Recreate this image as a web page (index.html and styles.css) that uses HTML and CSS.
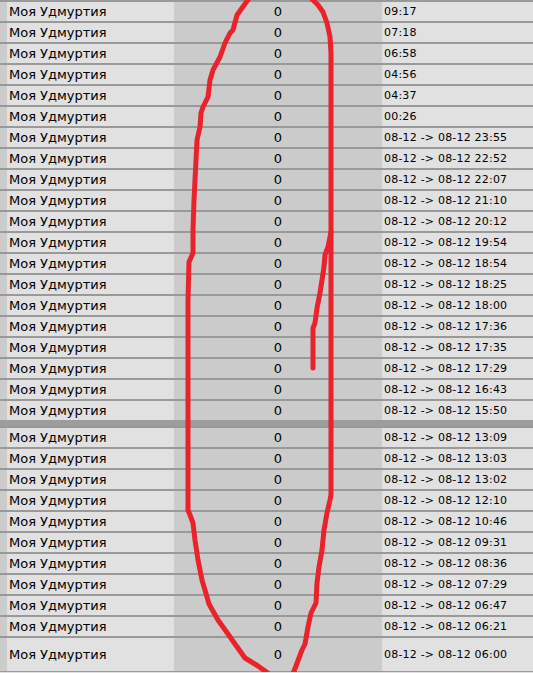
FILE: index.html
```html
<!DOCTYPE html>
<html lang="ru">
<head>
    <meta charset="UTF-8">
    <meta name="viewport" content="width=device-width, initial-scale=1.0">
    <title>Моя Удмуртия - история</title>
    <link rel="stylesheet" href="styles.css">
</head>
<body>
    <div class="board">
        <div class="row"><span class="name">Моя Удмуртия</span><span class="score">0</span><span class="time">09:17</span></div>
        <div class="row"><span class="name">Моя Удмуртия</span><span class="score">0</span><span class="time">07:18</span></div>
        <div class="row"><span class="name">Моя Удмуртия</span><span class="score">0</span><span class="time">06:58</span></div>
        <div class="row"><span class="name">Моя Удмуртия</span><span class="score">0</span><span class="time">04:56</span></div>
        <div class="row"><span class="name">Моя Удмуртия</span><span class="score">0</span><span class="time">04:37</span></div>
        <div class="row"><span class="name">Моя Удмуртия</span><span class="score">0</span><span class="time">00:26</span></div>
        <div class="row"><span class="name">Моя Удмуртия</span><span class="score">0</span><span class="time">08-12 -&gt; 08-12 23:55</span></div>
        <div class="row"><span class="name">Моя Удмуртия</span><span class="score">0</span><span class="time">08-12 -&gt; 08-12 22:52</span></div>
        <div class="row"><span class="name">Моя Удмуртия</span><span class="score">0</span><span class="time">08-12 -&gt; 08-12 22:07</span></div>
        <div class="row"><span class="name">Моя Удмуртия</span><span class="score">0</span><span class="time">08-12 -&gt; 08-12 21:10</span></div>
        <div class="row"><span class="name">Моя Удмуртия</span><span class="score">0</span><span class="time">08-12 -&gt; 08-12 20:12</span></div>
        <div class="row"><span class="name">Моя Удмуртия</span><span class="score">0</span><span class="time">08-12 -&gt; 08-12 19:54</span></div>
        <div class="row"><span class="name">Моя Удмуртия</span><span class="score">0</span><span class="time">08-12 -&gt; 08-12 18:54</span></div>
        <div class="row"><span class="name">Моя Удмуртия</span><span class="score">0</span><span class="time">08-12 -&gt; 08-12 18:25</span></div>
        <div class="row"><span class="name">Моя Удмуртия</span><span class="score">0</span><span class="time">08-12 -&gt; 08-12 18:00</span></div>
        <div class="row"><span class="name">Моя Удмуртия</span><span class="score">0</span><span class="time">08-12 -&gt; 08-12 17:36</span></div>
        <div class="row"><span class="name">Моя Удмуртия</span><span class="score">0</span><span class="time">08-12 -&gt; 08-12 17:35</span></div>
        <div class="row"><span class="name">Моя Удмуртия</span><span class="score">0</span><span class="time">08-12 -&gt; 08-12 17:29</span></div>
        <div class="row"><span class="name">Моя Удмуртия</span><span class="score">0</span><span class="time">08-12 -&gt; 08-12 16:43</span></div>
        <div class="row"><span class="name">Моя Удмуртия</span><span class="score">0</span><span class="time">08-12 -&gt; 08-12 15:50</span></div>

        <div class="gap"></div>

        <div class="row"><span class="name">Моя Удмуртия</span><span class="score">0</span><span class="time">08-12 -&gt; 08-12 13:09</span></div>
        <div class="row"><span class="name">Моя Удмуртия</span><span class="score">0</span><span class="time">08-12 -&gt; 08-12 13:03</span></div>
        <div class="row"><span class="name">Моя Удмуртия</span><span class="score">0</span><span class="time">08-12 -&gt; 08-12 13:02</span></div>
        <div class="row"><span class="name">Моя Удмуртия</span><span class="score">0</span><span class="time">08-12 -&gt; 08-12 12:10</span></div>
        <div class="row"><span class="name">Моя Удмуртия</span><span class="score">0</span><span class="time">08-12 -&gt; 08-12 10:46</span></div>
        <div class="row"><span class="name">Моя Удмуртия</span><span class="score">0</span><span class="time">08-12 -&gt; 08-12 09:31</span></div>
        <div class="row"><span class="name">Моя Удмуртия</span><span class="score">0</span><span class="time">08-12 -&gt; 08-12 08:36</span></div>
        <div class="row"><span class="name">Моя Удмуртия</span><span class="score">0</span><span class="time">08-12 -&gt; 08-12 07:29</span></div>
        <div class="row"><span class="name">Моя Удмуртия</span><span class="score">0</span><span class="time">08-12 -&gt; 08-12 06:47</span></div>
        <div class="row"><span class="name">Моя Удмуртия</span><span class="score">0</span><span class="time">08-12 -&gt; 08-12 06:21</span></div>
        <div class="row tall"><span class="name">Моя Удмуртия</span><span class="score">0</span><span class="time">08-12 -&gt; 08-12 06:00</span></div>

        <!-- red marker drawn over the score column -->
        <svg class="scribble" width="533" height="673" viewBox="0 0 533 673">
            <path d="M250 -3 L242 8 L237 15 L233 30 L230 33 L225 43 L220 57 L213 70 L210 80 L208 97 L203 107 L201 113 L200 127 L197 140 L196 160 L194 200 L193 230 L193 253 L189 262 L188 300 L188 510 L190 515 L193 523 L195 540 L198 560 L202 580 L207 597 L209 604 L218 620 L228 634 L235 644 L245 658 L258 666 L272 676"/>
            <path d="M292 676 L296 666 L302 650 L305 644 L308 627 L311 613 L316 603 L317 583 L319 567 L322 550 L324 530 L327 513 L330 500 L331 495 L331 160 L331 53 L330 37 L327 23 L323 12 L318 5 L310 -3"/>
            <path d="M331 232 L328 247 L325 255 L324 267 L322 280 L320 293 L317 308 L315 323 L313 328 L313 368"/>
        </svg>
    </div>
</body>
</html>
```

FILE: styles.css
```css
body {
    margin: 0;
    padding: 0;
    background-color: #e0e0e0;
    font-family: "DejaVu Sans", Verdana, sans-serif;
    color: #000;
}

.board {
    position: relative;
    width: 533px;
}

.row {
    display: grid;
    grid-template-columns: 174px 208px 1fr;
    height: 19px;
    line-height: 19px;
    border-top: 2px solid #999;
}

.row.tall {
    height: 32px;
    line-height: 33px;
    border-bottom: 2px solid #999;
}

.name {
    box-sizing: border-box;
    background-color: #e1e1e1;
    border-left: 7px solid #cccccc;
    padding-left: 2px;
    font-size: 13px;
    white-space: nowrap;
}

.score {
    background-color: #cbcbcb;
    text-align: center;
    font-size: 13px;
}

.time {
    background-color: #e1e1e1;
    padding-left: 2px;
    font-size: 11px;
    letter-spacing: 0.2px;
    white-space: nowrap;
}

.gap {
    height: 6px;
    background-color: #9d9d9d;
}

.scribble {
    position: absolute;
    top: 0;
    left: 0;
    pointer-events: none;
}

.scribble path {
    fill: none;
    stroke: #e8232b;
    stroke-width: 5;
    stroke-linejoin: round;
    stroke-linecap: round;
}
```
